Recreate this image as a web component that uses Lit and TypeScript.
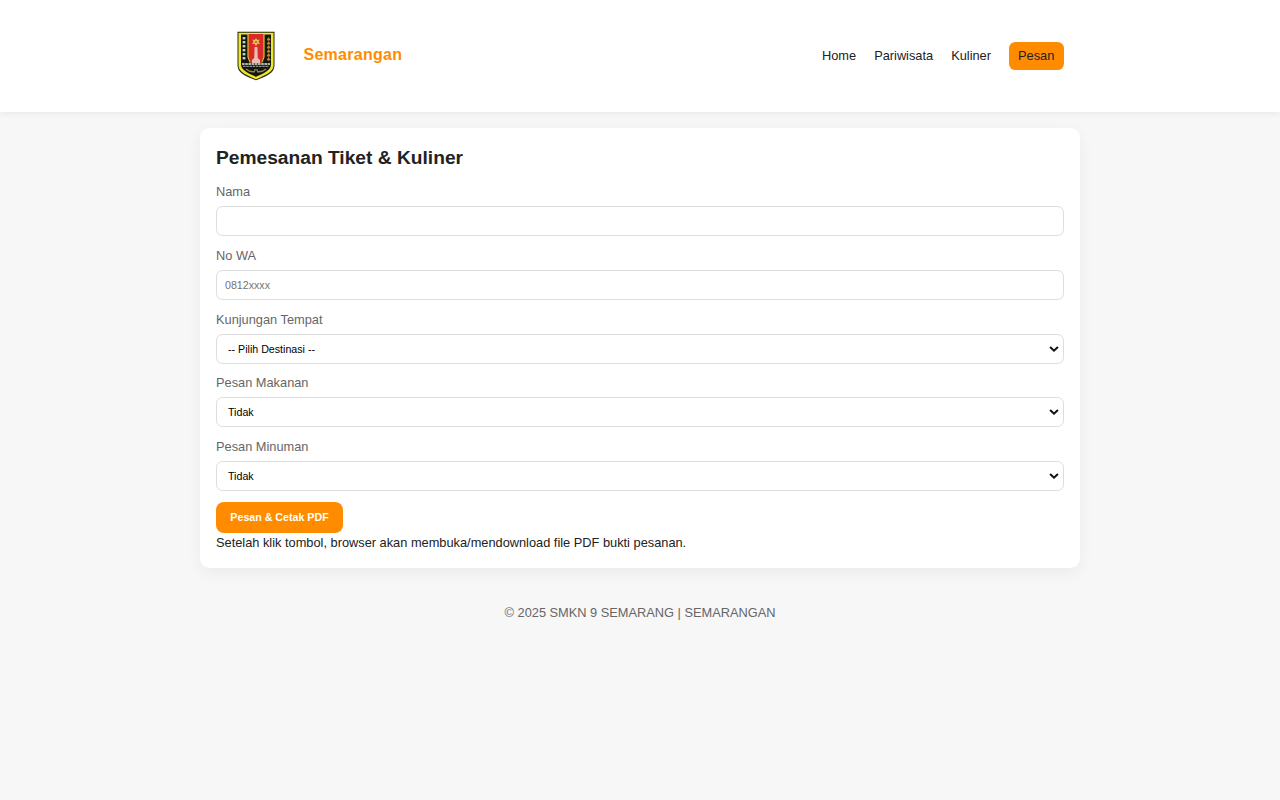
import { LitElement, html, css, svg } from "lit";
import { customElement, property } from "lit/decorators.js";

@customElement("city-crest")
class CityCrest extends LitElement {
  static styles = css`
    :host { display: block; width: 38px; height: 50px; }
    svg { display: block; }
  `;

  render() {
    const rows = [0, 1, 2, 3, 4, 5];
    return html`<svg width="38" height="50" viewBox="0 0 38 50">
      <path d="M.5 .8H37.5V34C37.5 42 30 45 19 49.300C8 45 .5 42 .5 34Z" fill="#26280f"/>
      <path d="M1.500 1.800H36.500V34C36.500 40.800 29.500 43.900 19 48.200C8.500 43.900 1.500 40.800 1.500 34Z" fill="#f0e62c"/>
      <path d="M4 3.600H34V33.500C34 38.600 28.200 41.800 19 45.800C9.800 41.800 4 38.600 4 33.500Z" fill="#15170f"/>
      <path d="M10.400 3H27.600V26L25.500 31.500H12.500L10.400 26Z" fill="#d9c63a"/>
      <path d="M11.600 3H26.400V26L24.500 31.500H13.500L11.600 26Z" fill="#d92b26"/>
      <path d="M17.600 16H20.400L20.800 27L23 29V32H15V29L17.200 27Z" fill="#e8bdb6"/>
      <path d="M19 7L20.200 9L22.600 8.600L21.500 11L23 13L20.400 12.800L19 15.300L17.600 12.800L15 13L16.500 11L15.400 8.600L17.800 9Z" fill="#efbf5c"/>
      <circle cx="19" cy="11" r="1.300" fill="#c08538"/>
      ${rows.map((i) => svg`
        <rect x="5.600" y=${6 + i * 4} width="2.800" height="2.400" fill="#b9d3c6"/>
        <path d=${`M29.6 ${9 + i * 4}l2-3 2 3-2 .8z`} fill="#bd8a2c"/>`)}
      <path d="M5 33H33" stroke="#e7e9e2" stroke-width="1.500" stroke-dasharray="2.600 .6" fill="none"/>
      <path d="M6 35.300H32" stroke="#a9aba4" stroke-width="1" stroke-dasharray="2.600 .6" fill="none"/>
      <path d="M9 38Q13 41.500 18 40.500M29 38Q25 41.500 20 40.500" stroke="#8d8a58" stroke-width="1.500" fill="none"/>
      <path d="M17 39H21" stroke="#b3ad6a" stroke-width="1"/>
    </svg>`;
  }
}

@customElement("select-field")
class SelectField extends LitElement {
  @property() option = "";

  static styles = css`
    :host { display: grid; width: 100%; height: 30px; align-items: center; }
    select, svg { grid-area: 1 / 1; }
    select {
      appearance: none;
      box-sizing: border-box;
      width: 100%;
      height: 30px;
      padding: 0 20px 0 11px;
      border: 1px solid #ddd;
      border-radius: 6.4px;
      background: #fff;
      color: #000;
      font: 10.667px "Liberation Sans", Arial, sans-serif;
    }
    svg { justify-self: end; margin-right: 5px; pointer-events: none; }
  `;

  render() {
    return html`<select><option>${this.option}</option></select>
      <svg width="10" height="8" viewBox="0 0 10 8">
        <path d="M1.100 2L5 5.700L8.900 2" fill="none" stroke="#101010" stroke-width="2"/>
      </svg>`;
  }
}

@customElement("app-root")
class AppRoot extends LitElement {
  static styles = css`
    :host {
      display: block;
      min-height: 100vh;
      background: #f7f7f7;
      color: #222;
      font: 12.8px/15px "Liberation Sans", Arial, sans-serif;
    }
    * { box-sizing: border-box; }
    header {
      height: 112px;
      background: #fff;
      box-shadow: 0 1.6px 6.4px rgba(0, 0, 0, 0.06);
    }
    .bar {
      width: 880px;
      height: 112px;
      margin: 0 auto;
      padding: 0 16px;
      display: flex;
      align-items: center;
      justify-content: space-between;
    }
    .brand { display: flex; align-items: center; padding-left: 21px; gap: 28.5px; }
    .name { color: #ff8c00; font-size: 16px; line-height: 18px; font-weight: 700; letter-spacing: 0.27px; padding-bottom: 3px; }
    nav { display: flex; }
    nav a { color: #222; padding: 6px 9px 7px; border-radius: 6.4px; }
    nav a.active { background: #ff8c00; margin-left: 9px; width: 55px; }
    main {
      width: 880px;
      height: 440px;
      margin: 16px auto 0;
      padding: 16px;
      border-radius: 9.6px;
      background: #fff;
      box-shadow: 0 4.8px 14.4px rgba(0, 0, 0, 0.05);
    }
    h2 { margin: 0; font-size: 19.2px; line-height: 26px; padding: 1px 0 12.5px; }
    .field { display: flex; flex-direction: column; height: 63.8px; }
    .field label { color: #666; height: 15px; margin-bottom: 7.5px; }
    .field.low label { padding-top: 1px; }
    .control {
      width: 100%;
      height: 30px;
      padding: 6.4px 8px;
      border: 1px solid #ddd;
      border-radius: 6.4px;
      background: #fff;
      font: 10.667px "Liberation Sans", Arial, sans-serif;
    }
    button {
      display: block;
      width: 127px;
      height: 31px;
      padding: 0 0 1px;
      border: 0;
      border-radius: 8px;
      background: #ff8c00;
      color: #fff;
      font: 700 10.667px "Liberation Sans", Arial, sans-serif;
    }
    .note { margin: 2px 0 0; }
    footer { margin-top: 37px; text-align: center; color: #666; }
  `;

  render() {
    return html`
      <header>
        <div class="bar">
          <div class="brand"><city-crest></city-crest><span class="name">Semarangan</span></div>
          <nav>
            <a>Home</a><a>Pariwisata</a><a>Kuliner</a><a class="active">Pesan</a>
          </nav>
        </div>
      </header>
      <main>
        <h2>Pemesanan Tiket &amp; Kuliner</h2>
        <div class="field"><label>Nama</label><input class="control" /></div>
        <div class="field low"><label>No WA</label><input class="control" placeholder="0812xxxx" /></div>
        <div class="field low"><label>Kunjungan Tempat</label><select-field option="-- Pilih Destinasi --"></select-field></div>
        <div class="field"><label>Pesan Makanan</label><select-field option="Tidak"></select-field></div>
        <div class="field"><label>Pesan Minuman</label><select-field option="Tidak"></select-field></div>
        <button>Pesan &amp; Cetak PDF</button>
        <p class="note">Setelah klik tombol, browser akan membuka/mendownload file PDF bukti pesanan.</p>
      </main>
      <footer>© 2025 SMKN 9 SEMARANG | SEMARANGAN</footer>
    `;
  }
}
